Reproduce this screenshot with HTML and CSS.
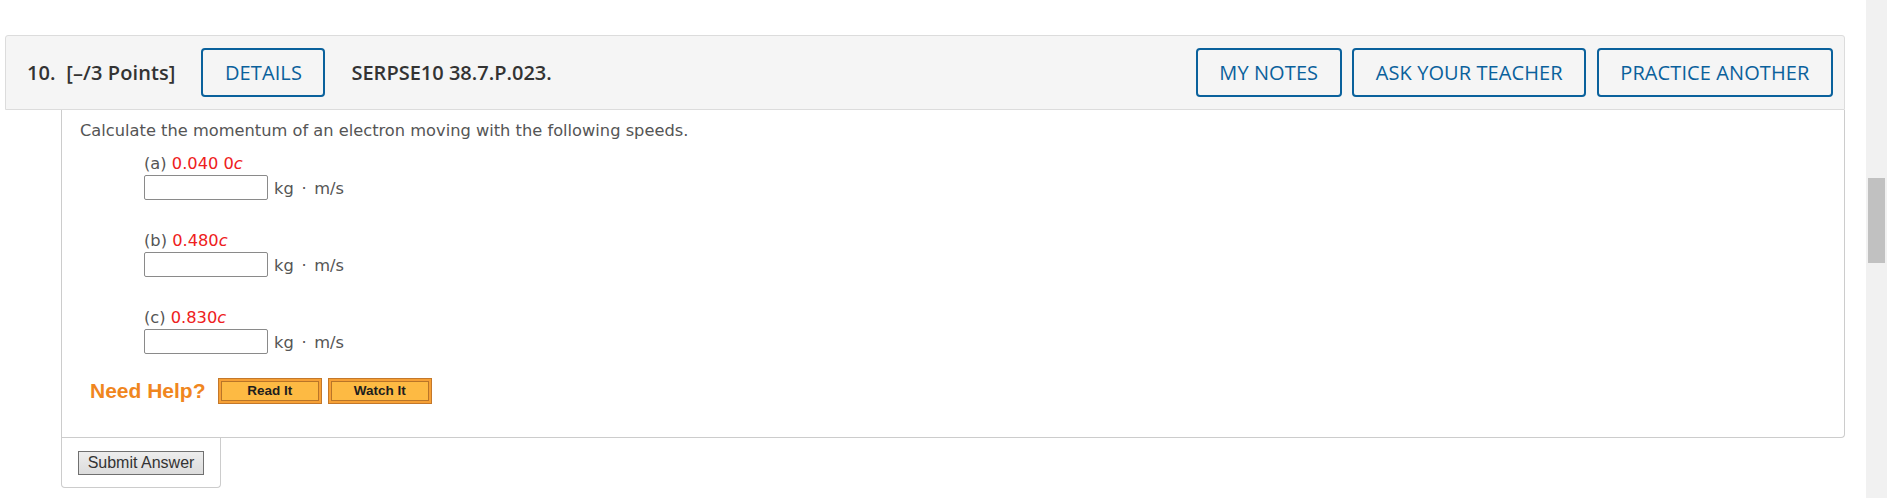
FILE: index.html
```html
<!DOCTYPE html>
<html lang="en">
<head>
<meta charset="utf-8">
<title>Question 10</title>
<link rel="stylesheet" href="styles.css">
</head>
<body>
<div class="page">
  <main class="main">
    <section class="question">
      <header class="qhead">
        <span class="qnum">10.&nbsp; [–/3 Points]</span>
        <button class="hbtn">DETAILS</button>
        <span class="qid">SERPSE10 38.7.P.023.</span>
        <div class="hactions">
          <button class="hbtn">MY NOTES</button>
          <button class="hbtn">ASK YOUR TEACHER</button>
          <button class="hbtn">PRACTICE ANOTHER</button>
        </div>
      </header>
      <div class="qcontent">
        <p class="prompt">Calculate the momentum of an electron moving with the following speeds.</p>
        <div class="parts">
          <div class="part">
            <div class="plabel">(a) <span class="val">0.040 0<i>c</i></span></div>
            <div class="prow"><input class="ans" type="text"><span class="unit">kg · m/s</span></div>
          </div>
          <div class="part">
            <div class="plabel">(b) <span class="val">0.480<i>c</i></span></div>
            <div class="prow"><input class="ans" type="text"><span class="unit">kg · m/s</span></div>
          </div>
          <div class="part">
            <div class="plabel">(c) <span class="val">0.830<i>c</i></span></div>
            <div class="prow"><input class="ans" type="text"><span class="unit">kg · m/s</span></div>
          </div>
        </div>
        <div class="help">
          <span class="needhelp">Need Help?</span>
          <button class="obtn"><span>Read It</span></button>
          <button class="obtn"><span>Watch It</span></button>
        </div>
      </div>
      <div class="submit-tab">
        <button class="submit">Submit Answer</button>
      </div>
    </section>
  </main>
  <div class="scrollbar"><div class="thumb"></div></div>
</div>
</body>
</html>
```
FILE: styles.css
```css
html, body {
  margin: 0;
  padding: 0;
  background: #ffffff;
}
.page {
  display: flex;
  height: 498px;
  overflow: hidden;
}
.main {
  flex: 1;
  padding: 35px 21px 0 5px;
}
.scrollbar {
  width: 21px;
  background: #f1f1f1;
  padding: 178px 2px 0 2px;
  box-sizing: border-box;
}
.thumb {
  height: 85px;
  background: #c1c1c1;
}
.qhead {
  display: flex;
  align-items: center;
  gap: 26px;
  height: 49px;
  padding: 12px 11px 12px 21px;
  background: #f5f5f5;
  border: 1px solid #dcdcdc;
  border-radius: 3px 3px 0 0;
  font-family: "Open Sans", "Liberation Sans", sans-serif;
  font-size: 20px;
  color: #333333;
}
.qnum, .qid {
  font-weight: 600;
  white-space: nowrap;
}
.qnum {
  letter-spacing: 0.1px;
}
.hactions {
  margin-left: auto;
  display: flex;
  gap: 10.5px;
}
.hbtn {
  height: 49px;
  padding: 0 21.5px;
  border: 2px solid #0a619c;
  border-radius: 4px;
  background: transparent;
  color: #0a619c;
  font-family: "Open Sans", "Liberation Sans", sans-serif;
  font-size: 20px;
  font-weight: 400;
  letter-spacing: 0.1px;
  white-space: nowrap;
}
.qcontent {
  margin-left: 56px;
  border: 1px solid #cccccc;
  border-top: none;
  border-radius: 0 0 4px 0;
  padding: 11px 18px 33px 18px;
  font-family: "DejaVu Sans", Verdana, sans-serif;
  font-size: 16.25px;
  line-height: 19px;
  color: #555555;
}
.prompt {
  margin: 0 0 14px 0;
}
.parts {
  display: flex;
  flex-direction: column;
  gap: 31px;
  margin-left: 64px;
}
.plabel {
  margin-bottom: 2px;
}
.val {
  color: #ee2020;
}
.val i {
  font-style: italic;
}
.prow {
  display: flex;
  align-items: center;
  gap: 6px;
}
.ans {
  width: 124px;
  height: 25px;
  box-sizing: border-box;
  border: 1px solid #8a8a8a;
  border-radius: 2px;
  margin: 0;
  padding: 0;
  background: #fff;
}
.unit {
  padding-top: 2px;
  word-spacing: 2.5px;
}
.help {
  display: flex;
  align-items: center;
  margin-top: 24px;
  margin-left: 10px;
}
.needhelp {
  font-family: "Liberation Sans", Arial, sans-serif;
  font-weight: 700;
  font-size: 21px;
  color: #f0861e;
  margin-right: 12.5px;
}
.obtn {
  width: 103.5px;
  height: 25.5px;
  margin: 0 6.5px 0 0;
  padding: 2px;
  box-sizing: border-box;
  border: 1px solid #c4782a;
  background: #f6a035;
  display: flex;
}
.obtn span {
  flex: 1;
  display: flex;
  align-items: center;
  justify-content: center;
  border: 1px solid #b97528;
  background: #fdba43;
  font-family: "Liberation Sans", Arial, sans-serif;
  font-weight: 700;
  font-size: 13.5px;
  color: #1e1e1e;
}
.submit-tab {
  margin-left: 56px;
  width: 160px;
  height: 50px;
  border: 1px solid #cccccc;
  border-top: none;
  border-radius: 0 0 4px 4px;
  padding: 13px 0 0 16px;
  box-sizing: border-box;
}
.submit {
  width: 126px;
  height: 24px;
  margin: 0;
  padding: 0;
  border: 1px solid #707070;
  background: linear-gradient(#ededed, #dcdcdc);
  font-family: "Liberation Sans", Arial, sans-serif;
  font-size: 16px;
  color: #333333;
}
```
